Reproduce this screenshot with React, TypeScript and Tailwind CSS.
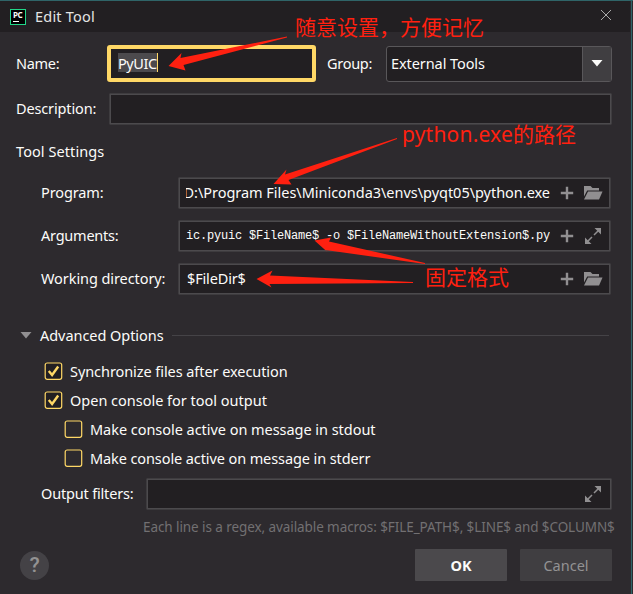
import type { ReactNode } from "react";

const FIELD = "flex items-center rounded-[1px] border border-[#3e3c3f] bg-[#221f22] inset-ring inset-ring-[#4c4a4d]";

function Plus() {
  return (
    <svg width="14" height="14" viewBox="0 0 14 14" className="shrink-0">
      <path d="M7 0.800v12.400M0.800 7h12.400" stroke="#918f91" strokeWidth="2.400" fill="none" />
    </svg>
  );
}

function Folder() {
  return (
    <svg width="20" height="16" viewBox="0 0 20 16" className="shrink-0">
      <path d="M1 1h6.500l2 2H16v2.500H4.200L1 11.500z" fill="#918f91" />
      <path d="M5 6.500h14.500L16 14.500H1z" fill="#918f91" />
    </svg>
  );
}

function Expand() {
  return (
    <svg width="18" height="18" viewBox="0 0 18 18" className="shrink-0">
      <path d="M10.500 1H17v6.500zM1 10.500V17h6.500z" fill="#918f91" />
      <path d="M15 3l-5 5M3 15l5-5" stroke="#918f91" strokeWidth="1.500" fill="none" />
    </svg>
  );
}

function PathRow({ label, children, icon }: { label: ReactNode; children: ReactNode; icon: ReactNode }) {
  return (
    <div className="flex h-8 items-center">
      <div className="w-[137px] shrink-0 pb-[2px] whitespace-nowrap">{label}</div>
      <div className={FIELD + " h-8 w-[433px] shrink-0 pl-[7px]"}>
        <div className="flex w-[364px] shrink-0 overflow-hidden pb-[2px] whitespace-pre">{children}</div>
        <div className="ml-[10px]"><Plus /></div>
        <div className="ml-[8px] flex w-[22px] justify-center">{icon}</div>
      </div>
    </div>
  );
}

function Check({ on, children }: { on?: boolean; children: ReactNode }) {
  return (
    <div className="flex h-[29px] items-center gap-[7px] whitespace-nowrap">
      <svg width="19" height="19" viewBox="0 0 19 19" className="shrink-0">
        <rect x="1.200" y="2" width="16.500" height="16.300" rx="2" fill={on ? "#221f22" : "none"} stroke="#ffd866" strokeWidth="1.200" />
        {on && <path d="M4.800 10l3.300 4L14.200 5.500" fill="none" stroke="#ffd866" strokeWidth="2.400" />}
      </svg>
      {children}
    </div>
  );
}

export default function App() {
  return (
    <div className="relative flex h-[594px] w-[633px] flex-col overflow-hidden border-t border-[#2f6468] bg-[#2d2a2e] font-['Noto_Sans','Noto_Sans_CJK_SC',sans-serif] text-[14.500px] leading-5 text-[#fcfcfa]">
      <div className="flex h-[31px] w-[630px] shrink-0 items-center bg-[#221f22] pl-[10px]">
        <div className="flex h-4 w-4 flex-col border border-[#21d789] bg-black pl-[2px]">
          <span className="mt-[1px] text-[8px] leading-[8px] font-bold tracking-[-0.500px]">PC</span>
          <span className="mt-[2px] h-px w-[6px] bg-white" />
        </div>
        <span className="ml-[9px] pb-[2px] tracking-[0.200px] text-[#e4e4e4]">Edit Tool</span>
        <svg width="12" height="12" viewBox="0 0 12 12" className="mr-[18px] mb-[3px] ml-auto">
          <path d="M1 1l10 10M11 1L1 11" stroke="#aaa" strokeWidth="1" />
        </svg>
      </div>

      <div className="mt-[13px] flex h-[37px] shrink-0 items-center pl-4">
        <span className="w-[91px] pb-[2px] tracking-[-0.300px]">Name:</span>
        <div className="flex h-[37px] w-[209px] items-center rounded-[3px] border-4 border-[#ffd866] bg-[#221f22] pl-[7px]">
          <span className="mb-[2px] flex h-[19px] items-center border-r border-[#ffd866] bg-[#4c4a4d] tracking-[-0.400px]">PyUIC</span>
        </div>
        <span className="ml-[11px] w-[59px] pb-[2px] tracking-[-0.300px]">Group:</span>
        <div className="flex h-9 w-[226px] items-center rounded-[3px] border border-[#59575a] bg-[#221f22] pl-1">
          <span className="pb-[2px] tracking-[-0.080px]">External Tools</span>
          <div className="ml-auto flex h-full w-[29px] items-center justify-center border-l border-[#59575a] bg-[#403e41]">
            <svg width="12" height="7" viewBox="0 0 12 7"><path d="M0.500 0h11L6 6.500z" fill="#fcfcfa" /></svg>
          </div>
        </div>
      </div>

      <div className="mt-[11px] flex h-8 shrink-0 items-center pl-4">
        <span className="w-[93px] pb-[2px] tracking-[-0.140px]">Description:</span>
        <div className={FIELD + " h-8 w-[503px]"} />
      </div>

      <div className="mt-[16px] mb-px shrink-0 pl-4 tracking-[0.080px]">Tool Settings</div>

      <div className="mt-[15px] flex shrink-0 flex-col gap-[11px] pl-[41px]">
        <PathRow label={<span className="tracking-[-0.120px]">Program:</span>} icon={<Folder />}>
          <div className="flex w-full justify-end overflow-hidden"><span className="tracking-[-0.030px]">D:\Program Files\Miniconda3\envs\pyqt05\python.exe</span></div>
        </PathRow>
        <PathRow label={<span className="tracking-[-0.230px]">Arguments:</span>} icon={<Expand />}>
          <span className="pt-px font-['Liberation_Mono',monospace] text-[12px] tracking-[-0.200px]">ic.pyuic $FileName$ -o $FileNameWithoutExtension$.py</span>
        </PathRow>
        <PathRow label={<span className="tracking-[-0.080px]">Working directory:</span>} icon={<Folder />}>
          <span className="pl-px tracking-[-0.150px]">$FileDir$</span>
        </PathRow>
      </div>

      <div className="mt-[30px] flex h-5 shrink-0 items-center pl-5">
        <svg width="12" height="7" viewBox="0 0 12 7"><path d="M0.500 0h11L6 6.500z" fill="#918f91" /></svg>
        <span className="ml-2 tracking-[-0.050px]">Advanced Options</span>
        <div className="mr-[24px] ml-2 h-px flex-1 bg-[#454347]" />
      </div>

      <div className="mt-[11px] flex shrink-0 flex-col pl-11">
        <Check on><span className="tracking-[-0.070px]">Synchronize files after execution</span></Check>
        <Check on><span className="tracking-[-0.010px]">Open console for tool output</span></Check>
        <div className="pl-5">
          <Check><span className="tracking-[-0.040px]">Make console active on message in stdout</span></Check>
          <Check><span className="tracking-[-0.100px]">Make console active on message in stderr</span></Check>
        </div>
      </div>

      <div className="mt-[6px] flex h-8 shrink-0 items-center pl-[41px]">
        <span className="w-[105px] pb-[2px] tracking-[-0.180px]">Output filters:</span>
        <div className={FIELD + " h-8 w-[466px] justify-end pr-[9px]"}><Expand /></div>
      </div>
      <div className="mt-[7px] shrink-0 pl-[143px] text-[13.500px] whitespace-nowrap text-[#727072]">
        <span className="tracking-[-0.080px]">Each line is a regex, available macros: $FILE_PATH$, $LINE$ and $COLUMN$</span>
      </div>

      <div className="mt-[12px] flex h-8 shrink-0 items-center pl-5">
        <div className="flex h-[29px] w-[29px] items-center justify-center rounded-full bg-[#444246] font-['Roboto',sans-serif] text-[21px] font-medium text-[#939293]">?</div>
        <div className="ml-[366px] flex h-8 w-[92px] items-center justify-center rounded-[1px] bg-[#4b494c] font-bold">OK</div>
        <div className="ml-[13px] flex h-8 w-[92px] items-center justify-center rounded-[1px] bg-[#403e41] text-[#939293]">Cancel</div>
      </div>

      <div className="absolute top-0 left-[631px] h-full w-px bg-[#2f6468]" />
      <svg width="633" height="594" viewBox="0 0 633 594" className="pointer-events-none absolute -top-px left-0" fill="#ff2010">
        <path d="M168.500 66L181.500 53L180.500 58L287 36.500V37.500L183.500 65L185.500 70.500z" />
        <path d="M273.500 184L286.500 169.500L285 174.500L397 138V139L288.500 180L291.500 184.500z" />
        <path d="M314.500 240.500L331 237.500L329 241.500L425 263V264L325.500 250L328 252.500z" />
        <path d="M256.500 279L272.500 270.500L270 275.500L413 282V283L269.500 284L271.500 287.500z" />
      </svg>
      <div className="absolute top-[11px] left-[295px] font-['Noto_Sans_CJK_SC',sans-serif] text-[21px] leading-7 whitespace-nowrap text-[#ff2010]">随意设置，方便记忆</div>
      <div className="absolute top-[119px] left-[402px] font-['Noto_Sans','Noto_Sans_CJK_SC',sans-serif] text-[21px] leading-7 whitespace-nowrap text-[#ff2010]"><span className="tracking-[0.200px]">python.exe</span>的路径</div>
      <div className="absolute top-[261px] left-[425px] font-['Noto_Sans_CJK_SC',sans-serif] text-[21px] leading-7 whitespace-nowrap text-[#ff2010]">固定格式</div>
    </div>
  );
}
